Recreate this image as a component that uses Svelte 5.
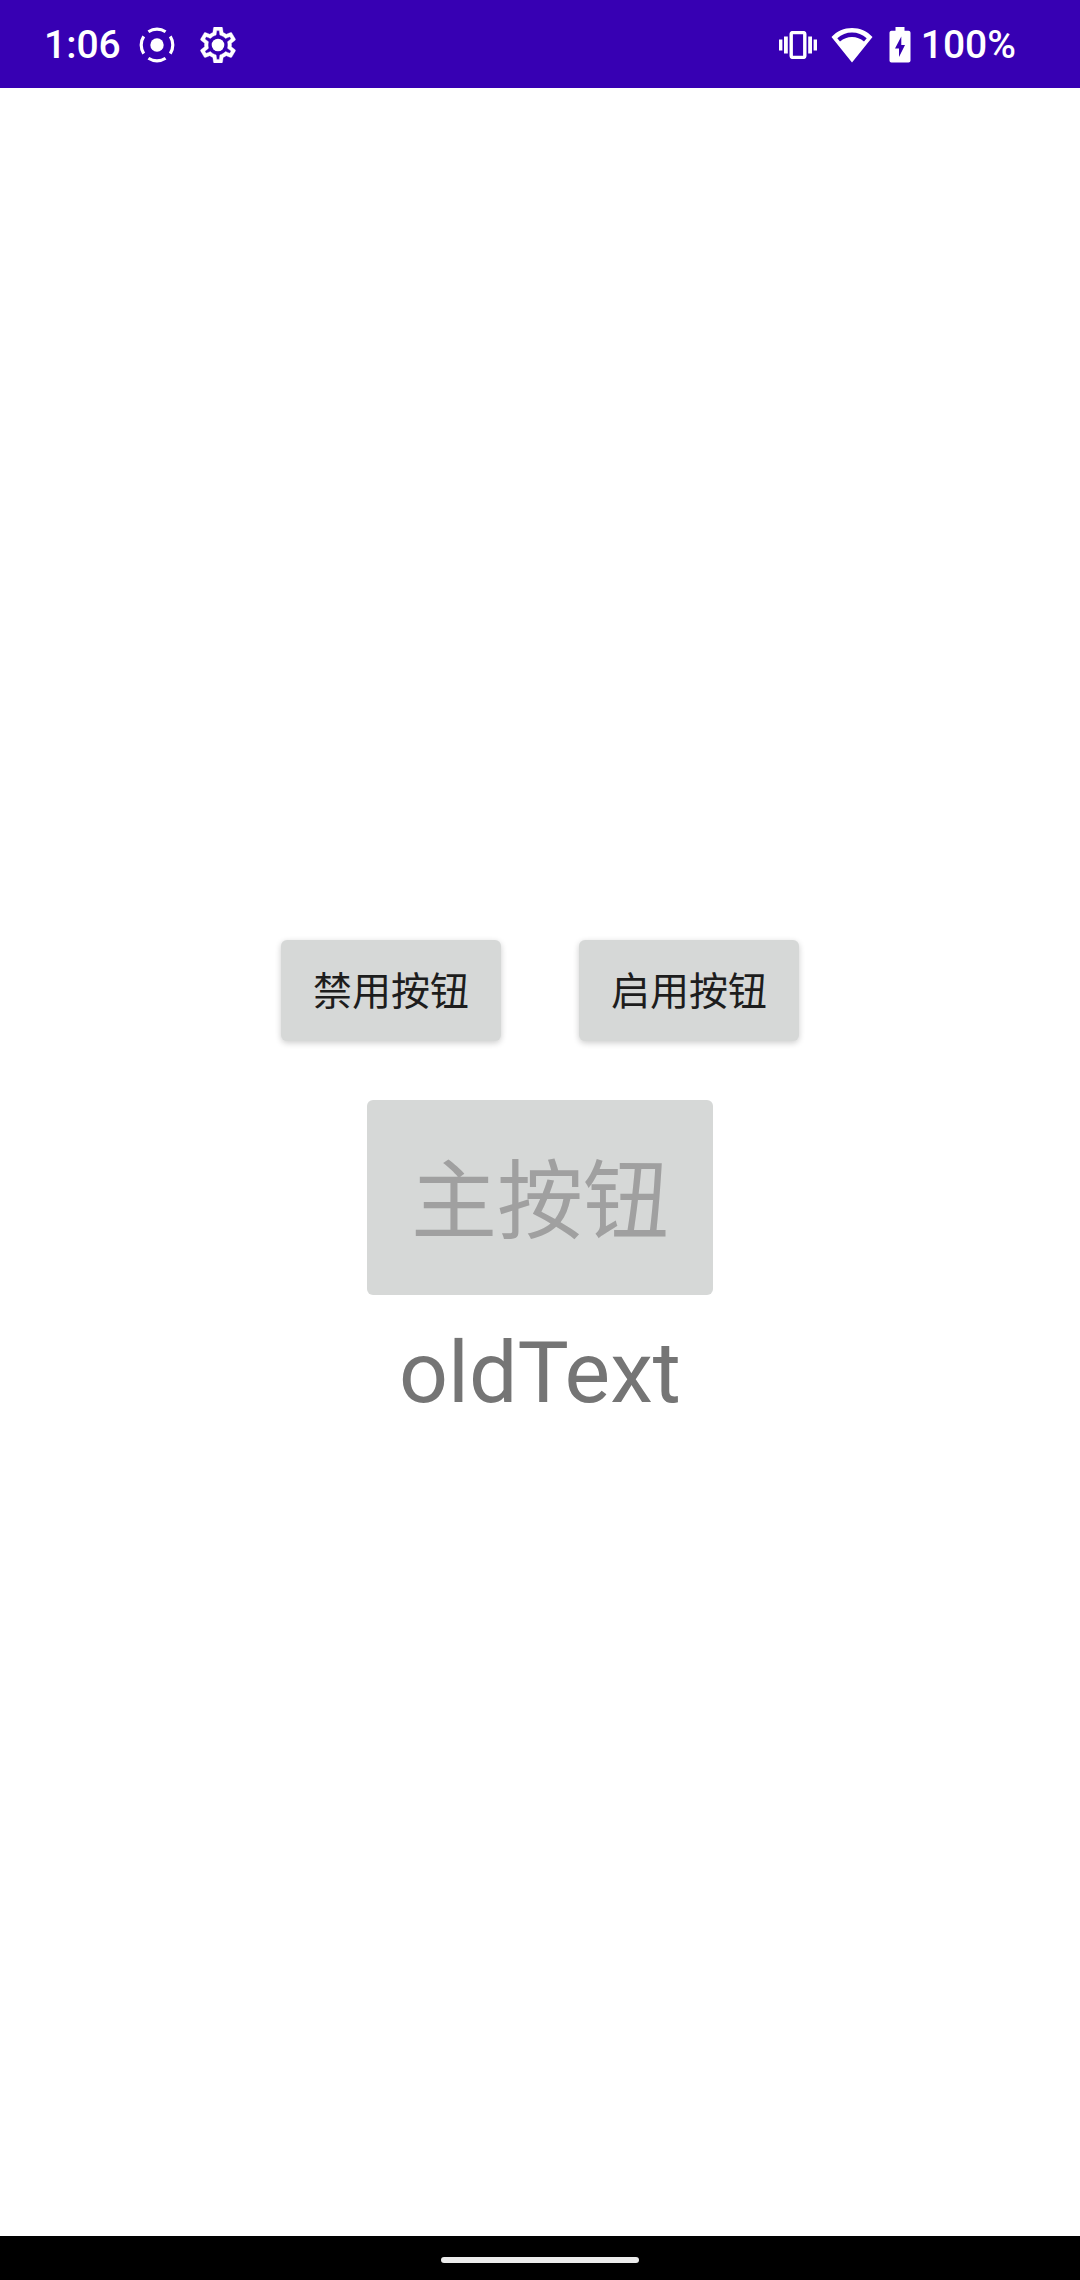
<script>
  let enabled = $state(false);
  let label = $state('oldText');
</script>

<div class="screen">
  <header class="status">
    <div class="group left">
      <time class="clock">1:06</time>
      <svg class="square" viewBox="0 0 36 36" aria-hidden="true">
        <circle cx="18" cy="18" r="6.7" fill="#fff" />
        <circle cx="18" cy="18" r="15.8" fill="none" stroke="#fff" stroke-width="3.2" pathLength="360" stroke-dasharray="66 24" stroke-dashoffset="-57" />
      </svg>
      <svg class="square gear" viewBox="2 2 20 20" aria-hidden="true">
        <path fill="#fff" stroke="#fff" stroke-width="0.2" fill-rule="evenodd" d="M19.43 12.98c.04-.32.07-.64.07-.98 0-.34-.03-.66-.07-.98l2.11-1.65c.19-.15.24-.42.12-.64l-2-3.46c-.09-.16-.26-.25-.44-.25-.06 0-.12.01-.17.03l-2.49 1c-.52-.4-1.08-.73-1.69-.98l-.38-2.65C14.46 2.18 14.25 2 14 2h-4c-.25 0-.46.18-.49.42l-.38 2.65c-.61.25-1.17.59-1.69.98l-2.49-1c-.06-.02-.12-.03-.18-.03-.17 0-.34.09-.43.25l-2 3.46c-.13.22-.07.49.12.64l2.11 1.65c-.04.32-.07.65-.07.98 0 .33.03.66.07.98l-2.11 1.65c-.19.15-.24.42-.12.64l2 3.46c.09.16.26.25.44.25.06 0 .12-.01.17-.03l2.49-1c.52.4 1.08.73 1.69.98l.38 2.65c.03.24.24.42.49.42h4c.25 0 .46-.18.49-.42l.38-2.65c.61-.25 1.17-.59 1.69-.98l2.49 1c.06.02.12.03.18.03.17 0 .34-.09.43-.25l2-3.46c.12-.22.07-.49-.12-.64l-2.11-1.65zm-1.98-1.71c.04.31.05.52.05.73 0 .21-.02.43-.05.73l-.14 1.13.89.7 1.08.84-.7 1.21-1.27-.51-1.04-.42-.9.68c-.43.32-.84.56-1.25.73l-1.06.43-.16 1.13-.2 1.35h-1.4l-.19-1.35-.16-1.13-1.06-.43c-.43-.18-.83-.41-1.23-.71l-.91-.7-1.06.43-1.27.51-.7-1.21 1.08-.84.89-.7-.14-1.13c-.03-.31-.05-.54-.05-.74s.02-.43.05-.73l.14-1.13-.89-.7-1.08-.84.7-1.21 1.27.51 1.04.42.9-.68c.43-.32.84-.56 1.25-.73l1.06-.43.16-1.13.2-1.35h1.39l.19 1.35.16 1.13 1.06.43c.43.18.83.41 1.23.71l.91.7 1.06-.43 1.27-.51.7 1.21-1.07.85-.89.7.14 1.13z" />
        <circle cx="12" cy="12" r="3.5" fill="#fff" />
      </svg>
    </div>
    <div class="group right">
      <svg class="vibrate" viewBox="0 0 38 28" aria-hidden="true">
        <rect x="12.2" y="1.6" width="13.6" height="24.8" rx="1.5" fill="none" stroke="#fff" stroke-width="3.4" />
        <path fill="#fff" d="M0 8.500h3.400v11H0zM5 5.500h3.800v17H5zM29.200 5.500h3.800v17h-3.800zM34.600 8.500H38v11h-3.400z" />
      </svg>
      <svg class="wifi" viewBox="0 0 42 36" aria-hidden="true">
        <path fill="#fff" fill-rule="evenodd" d="M21 35.500 0.500 10C6 4 13 1 21 1s15 3 20.500 9zM6.300 11.300 9 14.500C12.500 11.500 16.500 10 21 10s8.500 1.500 12 4.500l2.700-3.200C31.500 7.500 26.500 5.500 21 5.500S10.500 7.500 6.300 11.300z" />
      </svg>
      <svg class="battery" viewBox="0 0 22 36" aria-hidden="true">
        <path fill="#fff" fill-rule="evenodd" d="M6.500 0h9v3.800h4c1 0 2 .8 2 2V33.500c0 1.200-.9 2-2 2H2.500c-1.200 0-2-.8-2-2V5.800c0-1.200 1-2 2-2h4zM12.300 9.500 6 21.500h4v8.500l6-12h-3.700z" />
      </svg>
      <span class="percent">100%</span>
    </div>
  </header>

  <main>
    <div class="row">
      <button class="small" onclick={() => (enabled = false)}>禁用按钮</button>
      <button class="small" onclick={() => (enabled = true)}>启用按钮</button>
    </div>
    <button class="primary" disabled={!enabled} onclick={() => (label = 'newText')}>主按钮</button>
    <p>{label}</p>
  </main>

  <footer><span class="handle"></span></footer>
</div>

<style>
  :global(body) {
    margin: 0;
    background: #fff;
  }
  .screen {
    min-height: 100vh;
    display: flex;
    flex-direction: column;
    font-family: Roboto, 'Noto Sans CJK SC', sans-serif;
  }
  .status {
    height: 88px;
    box-sizing: border-box;
    padding: 2px 64px 0 44px;
    display: flex;
    align-items: center;
    justify-content: space-between;
    background: #3700b3;
    color: #fff;
    font-size: 39px;
    font-weight: 500;
    line-height: 48px;
  }
  .group {
    display: flex;
    align-items: center;
  }
  .left {
    gap: 18px;
  }
  .right {
    gap: 14px;
  }
  .square {
    width: 36px;
    height: 36px;
  }
  .gear {
    margin-left: 7px;
  }
  .vibrate {
    width: 38px;
    height: 28px;
  }
  .wifi {
    width: 42px;
    height: 36px;
  }
  .battery {
    width: 22px;
    height: 36px;
    margin: 0 -4px 0 2px;
  }
  main {
    flex: 1;
    display: flex;
    flex-direction: column;
    align-items: center;
    padding-top: 852px;
  }
  .row {
    display: flex;
    gap: 78px;
    margin-bottom: 59px;
  }
  button {
    border: 0;
    border-radius: 6px;
    background: #d6d8d7;
    color: #1d1d1d;
    font-family: inherit;
    font-weight: 400;
  }
  .small {
    padding: 24px 32px 20px;
    font-size: 39px;
    line-height: 57px;
    box-shadow: 0 2px 6px rgba(0, 0, 0, 0.2);
  }
  .primary {
    padding: 38px 44px 28px;
    font-size: 86px;
    line-height: 129px;
  }
  .primary:disabled {
    color: #a0a0a0;
  }
  p {
    margin: 26px 0 0;
    color: #757575;
    font-size: 86px;
    line-height: 104px;
  }
  footer {
    height: 44px;
    display: flex;
    align-items: center;
    justify-content: center;
    background: #000;
  }
  .handle {
    width: 198px;
    height: 6px;
    margin-top: 4px;
    border-radius: 3px;
    background: #ebebeb;
  }
</style>
